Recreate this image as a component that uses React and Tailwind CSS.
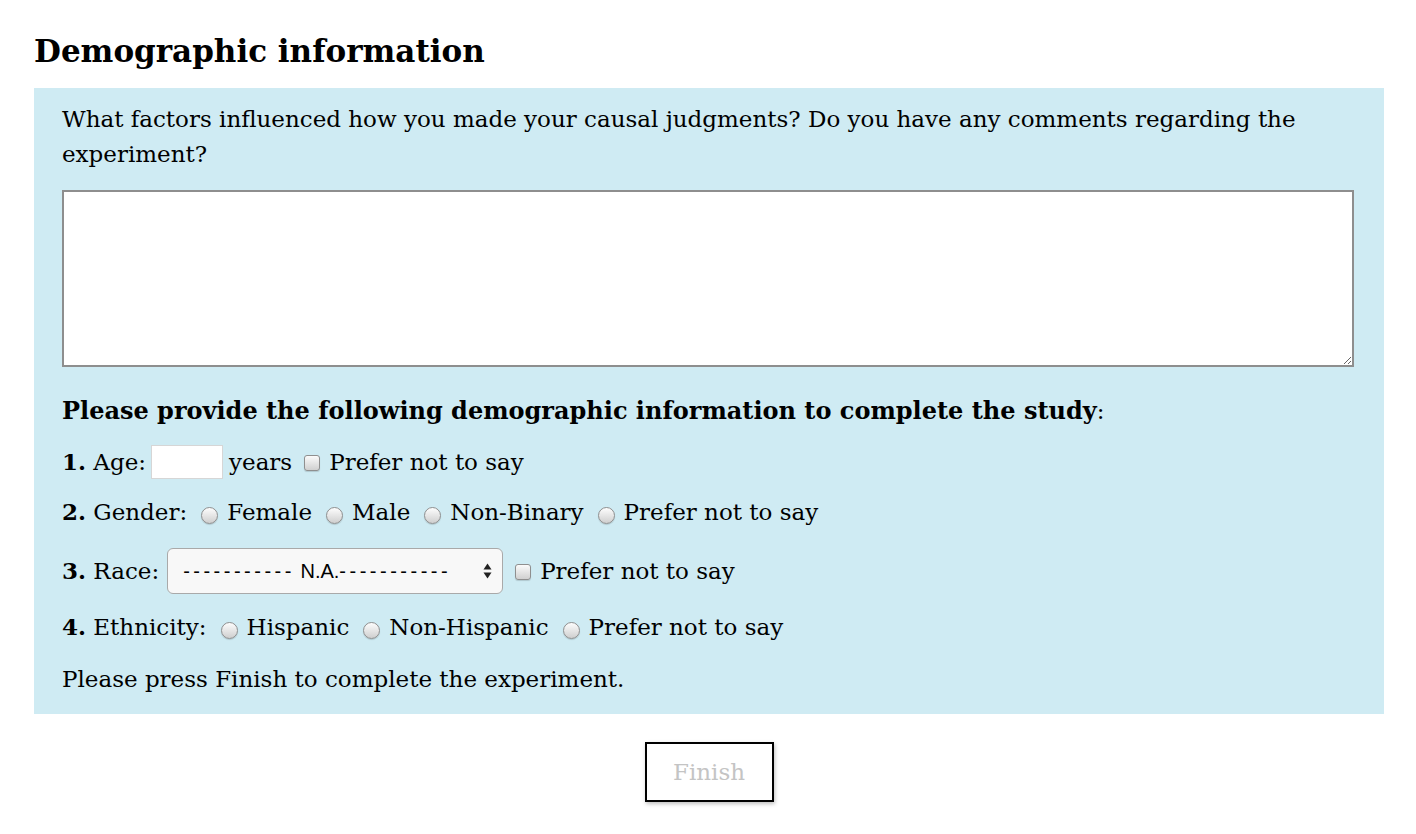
import { useState } from 'react';

const Radio = ({ name }) => (
    <input
        type="radio"
        name={name}
        className="appearance-none w-[17px] h-[17px] rounded-full border border-[#8f8f8f] bg-gradient-to-b from-[#fdfdfd] to-[#cfcfcf] shadow-[0_1px_1px_rgba(0,0,0,0.15)] ml-[14px] mr-[9px] translate-y-[3px] shrink-0"
    />
);

const Check = () => (
    <input
        type="checkbox"
        className="appearance-none w-[16px] h-[16px] rounded-[3px] border border-[#8f8f8f] bg-gradient-to-b from-[#fbfbfb] to-[#d0d0d0] shadow-[0_1px_1px_rgba(0,0,0,0.15)] ml-[12px] mr-[9px] translate-y-[1px] shrink-0"
    />
);

export default function App() {
    const [comments, setComments] = useState('');

    return (
        <div className="bg-white min-h-screen pl-[34px] pr-[32px] text-black" style={{ fontFamily: '"DejaVu Serif", Georgia, serif' }}>
            <h1 className="pt-[31px] pb-[17px] text-[31px] leading-[40px] font-bold">Demographic information</h1>

            {/* Survey panel */}
            <div className="bg-[#cfebf3] pl-[28px] pr-[30px] pt-[14px] pb-[17px] text-[23px]">
                <p className="leading-[35px]">
                    What factors influenced how you made your causal judgments? Do you have any comments regarding the experiment?
                </p>
                <textarea
                    value={comments}
                    onChange={e => setComments(e.target.value)}
                    className="block w-full h-[177px] mt-[18px] bg-white border-2 border-[#8e8e8e] outline-none"
                />

                <p className="mt-[26px] h-[36px] leading-[36px]">
                    <b className="text-[24px]">Please provide the following demographic information to complete the study</b>:
                </p>

                <div className="mt-[15px] h-[36px] flex items-center">
                    <b>1.</b>&nbsp;Age:
                    <input type="text" className="w-[72px] h-[34px] ml-[5px] mr-[6px] bg-white border border-[#d6d6d6] outline-none" />
                    years
                    <Check />
                    Prefer not to say
                </div>

                <div className="mt-[14px] h-[36px] flex items-center">
                    <b>2.</b>&nbsp;Gender:
                    <Radio name="gender" />Female
                    <Radio name="gender" />Male
                    <Radio name="gender" />Non-Binary
                    <Radio name="gender" />Prefer not to say
                </div>

                <div className="mt-[18px] h-[46px] flex items-center">
                    <b>3.</b>&nbsp;Race:
                    <div className="relative ml-[8px] w-[336px] h-[46px] rounded-[6px] border border-[#a9a9a9] bg-[#f8f8f8] flex items-center pl-[15px] text-[20px] shrink-0" style={{ fontFamily: '"Liberation Sans", Arial, sans-serif' }}>
                        <span className="tracking-[3.5px]">-----------</span>
                        <span>&nbsp;N.A.</span>
                        <span className="tracking-[3.5px]">-----------</span>
                        <svg className="absolute right-[10px] top-1/2 -translate-y-1/2" width="9" height="17" viewBox="0 0 9 17">
                            <path d="M4.5 1 L8.5 7 H0.5 Z" fill="#222" />
                            <path d="M4.5 16 L8.5 10 H0.5 Z" fill="#222" />
                        </svg>
                    </div>
                    <Check />
                    Prefer not to say
                </div>

                <div className="mt-[15px] h-[36px] flex items-center">
                    <b>4.</b>&nbsp;Ethnicity:
                    <Radio name="eth" />Hispanic
                    <Radio name="eth" />Non-Hispanic
                    <Radio name="eth" />Prefer not to say
                </div>

                <p className="mt-[16px] h-[36px] leading-[36px]">Please press Finish to complete the experiment.</p>
            </div>

            <div className="flex justify-center pt-[28px]">
                <button className="w-[129px] h-[60px] border-2 border-black bg-white text-[#c4c4c4] text-[23px] shadow-[1px_2px_4px_rgba(0,0,0,0.25)]">
                    Finish
                </button>
            </div>
        </div>
    );
}
